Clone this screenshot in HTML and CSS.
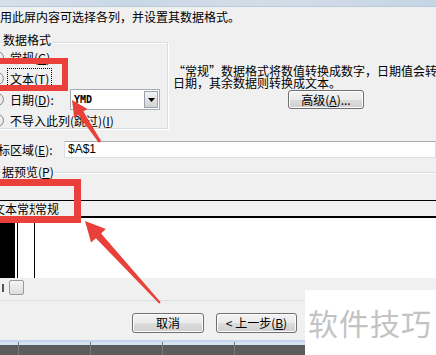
FILE: index.html
```html
<!DOCTYPE html>
<html lang="zh-CN">
<head>
<meta charset="utf-8">
<link rel="stylesheet" href="styles.css">
</head>
<body>
<div class="titlebar"></div>
<div class="intro">用此屏内容可选择各列，并设置其数据格式。</div>

<div class="format">
  <div class="fmt-group">
    <div class="legend">数据格式</div>
    <div class="opt"><span class="radio"></span><span>常规(<u>G</u>)</span></div>
    <div class="opt"><span class="radio on"></span><span class="focus">文本(<u>T</u>)</span></div>
    <div class="opt"><span class="radio"></span><span class="date-label">日期(<u>D</u>):</span>
      <span class="combo"><span class="combo-val">YMD</span><span class="combo-btn"><svg width="7" height="4" viewBox="0 0 7 4"><path d="M0 0H7L3.5 4Z" fill="#000"/></svg></span></span>
    </div>
    <div class="opt"><span class="radio"></span><span>不导入此列(跳过)(<u>I</u>)</span></div>
  </div>
  <div class="fmt-desc">
    <p class="desc">“常规”数据格式将数值转换成数字，日期值会转换成<br>日期，其余数据则转换成文本。</p>
    <button class="btn adv">高级(<u>A</u>)...</button>
  </div>
</div>

<div class="target">
  <span class="target-label">标区域(<u>E</u>):</span>
  <div class="input">$A$1</div>
</div>

<div class="preview">
  <div class="legend">据预览(<u>P</u>)</div>
  <div class="grid">
    <div class="grid-head">
      <span class="c0">文本</span><span class="c1">常规</span><span class="c2">常规</span>
    </div>
    <div class="grid-body">
      <span class="c0 sel"></span><span class="c1"></span><span class="c2"></span>
    </div>
    <div class="hscroll"><span class="arrow-l"></span><span class="thumb"></span></div>
  </div>
</div>

<div class="footer">
  <button class="btn cancel">取消</button>
  <button class="btn back">&lt; 上一步(<u>B</u>)</button>
</div>

<div class="taskbar">
  <span></span><span></span><span></span><span></span><span></span>
</div>

<div class="watermark">软件技巧</div>

<svg class="marks" width="436" height="355" viewBox="0 0 436 355">
  <rect x="-5" y="61" width="70" height="27" fill="none" stroke="#e9403a" stroke-width="6"/>
  <rect x="-5" y="182.5" width="82.5" height="37" fill="none" stroke="#e9403a" stroke-width="7"/>
  <polygon fill="#e9403a" points="72,100 87.5,108.9 83.4,111.6 101.2,141.2 98.8,142.8 78.4,115 74.2,117.7"/>
  <polygon fill="#e9403a" points="85,221 105.9,229.1 101.1,233.4 160.7,302.3 159.3,303.7 95.9,238.2 91.1,242.5"/>
</svg>
</body>
</html>
```
FILE: styles.css
```css
* { box-sizing: border-box; }
html, body { margin: 0; padding: 0; }
body {
  width: 436px;
  height: 355px;
  overflow: hidden;
  position: relative;
  background: #f0f0f0;
  font-family: "Noto Sans CJK SC", "Noto Sans", sans-serif;
  font-size: 12px;
  color: #000;
}
u { text-decoration: underline; text-underline-offset: 1px; }

.titlebar {
  height: 7px;
  background: linear-gradient(90deg, #d6e0ea, #c9d7e5 30%, #d3dde8 60%, #c6d5e4);
  border-bottom: 1px solid #b7cadc;
}
.intro {
  height: 19px;
  line-height: 19px;
  white-space: nowrap;
}

.format {
  display: flex;
  height: 104px;
}
.fmt-group {
  flex: none;
  margin: 16px 0 0 -10px;
  width: 178px;
  height: 87px;
  border: 1px solid #d5dfe5;
  box-shadow: inset 1px 1px 0 #fff, 1px 1px 0 #fff;
}
.legend {
  margin: -10px 0 0 12px;
  height: 12px;
  line-height: 14px;
  background: #f0f0f0;
  display: table;
  padding: 0 1px 0 0;
  white-space: nowrap;
}
.opt {
  height: 21px;
  display: flex;
  align-items: center;
  white-space: nowrap;
}
.radio {
  width: 13px;
  height: 13px;
  border-radius: 50%;
  border: 1px solid #8b8b8b;
  background: radial-gradient(circle at 40% 40%, #fff, #dcdcdc);
  margin: 0 6px 0 0;
  flex: none;
  position: relative;
}
.radio.on::after {
  content: "";
  position: absolute;
  left: 3px; top: 3px;
  width: 5px; height: 5px;
  border-radius: 50%;
  background: radial-gradient(circle at 40% 40%, #6fb0e8, #0d3c6e);
}
.focus {
  outline: 1px dotted #000;
  outline-offset: 1px;
  padding: 0 1px;
  margin-left: -1px;
}
.date-label { width: 60px; flex: none; }
.combo {
  width: 90px;
  height: 21px;
  border: 1px solid #a5acb5;
  background: #fff;
  display: flex;
  align-items: center;
  justify-content: space-between;
  padding: 1px;
}
.combo-val {
  font-family: "DejaVu Sans Mono", monospace;
  font-weight: bold;
  font-size: 10px;
  padding-left: 2px;
}
.combo-btn {
  width: 14px;
  height: 17px;
  border: 1px solid #9aa3ad;
  background: linear-gradient(#f3f3f3, #e2e2e2 50%, #d3d3d3);
  display: flex;
  align-items: center;
  justify-content: center;
}

.fmt-desc {
  padding: 39px 0 0 5px;
  white-space: nowrap;
}
.desc {
  margin: 0;
  line-height: 12px;
}
.btn {
  font-family: "Noto Sans CJK SC", sans-serif;
  font-size: 12px;
  color: #000;
  border: 1px solid #707070;
  border-radius: 3px;
  background: linear-gradient(#f2f2f2, #ebebeb 50%, #dddddd 51%, #cfcfcf);
  box-shadow: inset 0 0 0 1px #fcfcfc;
  padding: 0;
  line-height: 16px;
  display: flex;
  align-items: center;
  justify-content: center;
}
.adv {
  width: 76px;
  height: 19px;
  margin: 1px 0 0 115px;
}

.target {
  margin-top: 11px;
  height: 17px;
  display: flex;
  align-items: center;
}
.target-label {
  width: 66px;
  margin-left: -2px;
  flex: none;
  white-space: nowrap;
}
.input {
  flex: 1;
  height: 17px;
  background: #fff;
  border: 1px solid #dbdfe6;
  border-top-color: #abadb3;
  font-family: "Liberation Sans", sans-serif;
  font-size: 12px;
  line-height: 15px;
  padding-left: 3px;
}

.preview {
  margin: 14px 0 0 -10px;
  width: 460px;
  height: 129px;
  border: 1px solid #d5dfe5;
  box-shadow: inset 1px 1px 0 #fff;
}
.preview .legend { margin-left: 11px; margin-top: -8px; height: 14px; }
.grid {
  margin-top: 21px;
  margin-left: 0;
}
.grid-head {
  height: 18px;
  border-top: 1px solid #000;
  border-bottom: 2px solid #000;
  display: flex;
  line-height: 15px;
  white-space: nowrap;
}
.c0 { width: 26px; flex: none; overflow: hidden; }
.c1 { width: 18px; flex: none; overflow: hidden; }
.c2 { flex: 1; overflow: hidden; }
.grid-head .c0 { padding-left: 2px; }
.grid-body {
  height: 60px;
  display: flex;
  background: #fff;
}
.grid-body .c0 { width: 26px; background: #000; border-right: 2px solid #fff; }
.grid-body .c1 { width: 18px; border-left: 1px solid #000; border-right: 1px solid #000; }
.hscroll {
  height: 19px;
  display: flex;
  align-items: center;
  gap: 3px;
  padding-left: 2px;
}
.arrow-l {
  width: 13px;
  height: 8px;
  background: linear-gradient(90deg, transparent 9px, #555 9px, #555 11px, transparent 11px);
}
.thumb {
  width: 15px;
  height: 15px;
  border: 1px solid #9a9a9a;
  border-radius: 2px;
  background: linear-gradient(#f6f6f6, #dcdcdc);
}

.footer {
  display: flex;
  gap: 12px;
  padding-left: 132px;
  margin-top: 12px;
  height: 27px;
}
.cancel { width: 72px; height: 20px; }
.back { width: 81px; height: 20px; }

.taskbar {
  height: 15px;
  border-top: 2px solid #c2d5ea;
  background: linear-gradient(#d5e3f1 0 3px, #5c5c5c 3px);
  display: flex;
}
.taskbar span {
  width: 72px;
  flex: none;
  border-left: 1px solid #7a7a7a;
}
.taskbar span:first-child { width: 18px; border-left: none; }

.watermark {
  position: absolute;
  left: 305px;
  top: 290px;
  width: 131px;
  height: 65px;
  background: #fff;
  color: #c3c3c3;
  font-size: 30px;
  line-height: 30px;
  padding: 17px 0 0 3px;
  letter-spacing: 1px;
  white-space: nowrap;
}
.marks {
  position: absolute;
  left: 0;
  top: 0;
  pointer-events: none;
}
```
